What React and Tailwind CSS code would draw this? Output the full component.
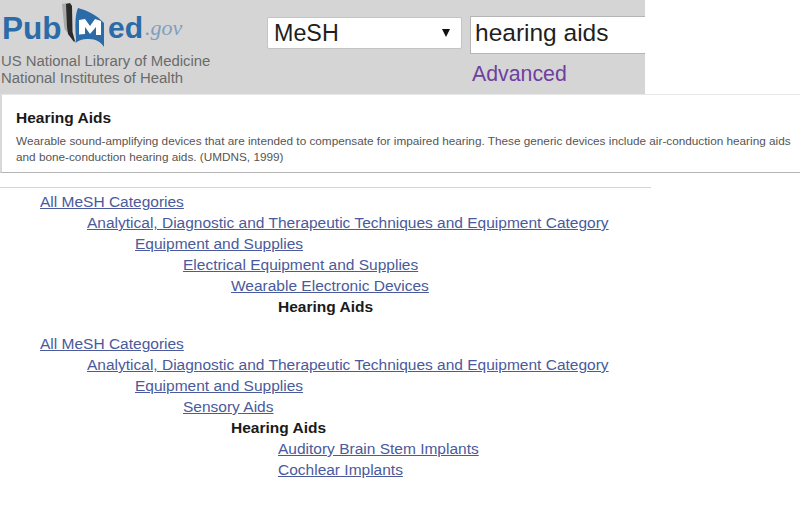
import React from "react";

const sans = { fontFamily: '"Liberation Sans", Arial, sans-serif' };

function Book() {
  return (
    <svg width="46" height="48" viewBox="60 0 46 48" className="shrink-0">
      <path d="M62 3 L68 2 L68 30 L72 34 L66 30 Q64 28 64 24 Z" fill="#a9a9a9" />
      <path d="M66 3 L70 2 L72 5 L72.5 31 L75 40 L74 41 L68 33 L67 26 Z" fill="#2b2b2b" />
      <path d="M76 38 C75 24 75 14 78 7 C86 9 97 14 104 22 L104 46 C101 41 96 38 89 38 C84 37.5 79 39 75.500 42 Z" fill="#2a6ba8" />
      <path d="M79 33.500 L79 19 L85 18 L90 25 L95 18 L101 20 L101 34 L96 34 L96 26 L90 33 L85 26 L85 33 Z" fill="#ffffff" />
    </svg>
  );
}

const Row = ({ indent, bold, children }) => (
  <div className={`h-[21px] leading-[21px] text-[15.5px] ${indent}`}>
    {bold ? (
      <span className="font-bold text-[#1a1a1a]">{children}</span>
    ) : (
      <a href="#" className="text-[#4a5a9c] underline">{children}</a>
    )}
  </div>
);

export default function App() {
  return (
    <div className="w-[800px] h-[511px] bg-white overflow-hidden" style={sans}>
      <header className="w-[645px] h-[94px] bg-[#d5d5d5] flex">
        <div className="w-[267px] shrink-0 pl-px">
          <div className="h-[48px] flex items-end">
            <span className="text-[31.5px] leading-[30px] font-bold text-[#2a6ba8] ml-px mb-[5px] w-[59px] whitespace-nowrap">Pub</span>
            <span className="-mb-px -ml-px mr-px"><Book /></span>
            <span className="text-[30px] leading-[30px] font-bold text-[#2a6ba8] ml-px mb-[5px]">ed</span>
            <span className="text-[22px] leading-[22px] italic text-[#7f9fbd] ml-[2px] mb-[9px]" style={{ fontFamily: '"Liberation Serif", serif' }}>.gov</span>
          </div>
          <div className="mt-[5px] text-[14.9px] leading-[17px] text-[#6b6b6b]">
            <div>US National Library of Medicine</div>
            <div>National Institutes of Health</div>
          </div>
        </div>
        <div className="pt-[17px] shrink-0">
          <div className="w-[195px] h-[32px] bg-white border border-[#c4c4c4] rounded-[2px] flex items-center justify-between pl-[6px] pr-[11px] text-[23.3px] text-[#1f1f1f]">
            <span>MeSH</span>
            <svg width="8" height="8" viewBox="0 0 8 8"><path d="M0 0 H8 L4 8 Z" fill="#111" /></svg>
          </div>
        </div>
        <div className="ml-[8px] pt-[16px] flex-1 min-w-0">
          <div className="h-[38px] bg-white border border-[#b5b5b5] border-r-0 pl-[4px] text-[24.5px] leading-[32px] text-[#1f1f1f]">hearing aids</div>
          <a href="#" className="block mt-[7px] ml-[2px] text-[21.3px] leading-[26px] text-[#6f3f9f]">Advanced</a>
        </div>
      </header>
      <section className="w-[800px] h-[79px] border-l-2 border-b border-t border-l-[#d8d8d8] border-t-[#e6e6e6] border-b-[#b5b5b5] pl-[14px] pt-[14px]">
        <h1 className="text-[15.5px] leading-[18px] font-bold text-[#1a1a1a]">Hearing Aids</h1>
        <p className="mt-[6px] text-[11.78px] leading-[16px] text-[#555] whitespace-nowrap">
          Wearable sound-amplifying devices that are intended to compensate for impaired hearing. These generic devices include air-conduction hearing aids
          <br />
          and bone-conduction hearing aids. (UMDNS, 1999)
        </p>
      </section>
      <hr className="w-[651px] mt-[14px] border-t border-[#d4d4d4]" />
      <main className="pl-[40px] pt-[3px]">
        <Row indent="pl-0">All MeSH Categories</Row>
        <Row indent="pl-[47px]">Analytical, Diagnostic and Therapeutic Techniques and Equipment Category</Row>
        <Row indent="pl-[95px]">Equipment and Supplies</Row>
        <Row indent="pl-[143px]">Electrical Equipment and Supplies</Row>
        <Row indent="pl-[191px]">Wearable Electronic Devices</Row>
        <Row indent="pl-[238px]" bold>Hearing Aids</Row>
        <div className="h-[16px]" />
        <Row indent="pl-0">All MeSH Categories</Row>
        <Row indent="pl-[47px]">Analytical, Diagnostic and Therapeutic Techniques and Equipment Category</Row>
        <Row indent="pl-[95px]">Equipment and Supplies</Row>
        <Row indent="pl-[143px]">Sensory Aids</Row>
        <Row indent="pl-[191px]" bold>Hearing Aids</Row>
        <Row indent="pl-[238px]">Auditory Brain Stem Implants</Row>
        <Row indent="pl-[238px]">Cochlear Implants</Row>
      </main>
    </div>
  );
}
